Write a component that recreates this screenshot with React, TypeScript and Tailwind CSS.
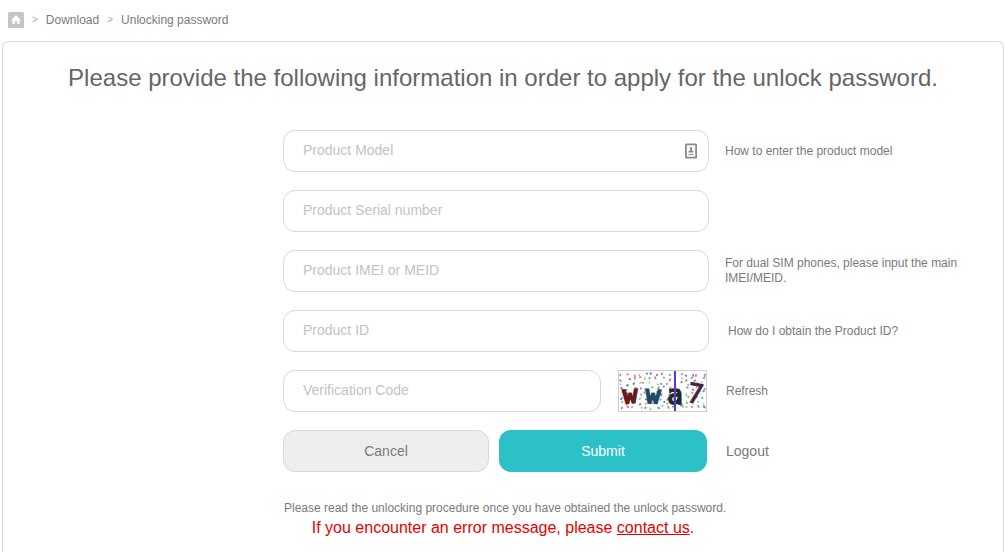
import type { ReactNode } from "react";

function HomeIcon() {
  return (
    <svg viewBox="0 0 16 16" className="block size-4" aria-hidden="true">
      <rect width="16" height="16" rx="1.5" fill="#c4c4c4" />
      <path d="M8 3 13.2 8.200H11.6V12H9.2V9.2H6.8V12H4.4V8.200H2.8Z" fill="#fff" />
    </svg>
  );
}

function CardIcon() {
  return (
    <svg viewBox="0 0 12 16" className="block h-4 w-3" aria-hidden="true">
      <rect x="0.9" y="1.4" width="10.2" height="13.2" rx="0.6" fill="#fff" stroke="#8a8a8a" strokeWidth="1.8" />
      <circle cx="6" cy="5.2" r="1.2" fill="#8a8a8a" />
      <path d="M5.2 6h1.6v1.4l1.7.8v1.3h-5V8.2l1.7-.8z" fill="#8a8a8a" />
      <path d="M3.3 11.5h5.4" stroke="#9a9a9a" strokeWidth="1.2" />
    </svg>
  );
}

const SPECKS = (() => {
  const colours = ["#d23b6f", "#3fae55", "#4a3fd4", "#c13fc5", "#3aa0b8", "#8a8a30", "#5a4a90", "#e0603a", "#6fd48a"];
  let seed = 4711;
  const next = () => {
    seed = (seed * 16807) % 2147483647;
    return seed / 2147483647;
  };
  return Array.from({ length: 120 }, (_, i) => ({
    x: 2 + (i % 15) * 5.8 + next() * 4.5,
    y: 2 + Math.floor(i / 15) * 4.8 + next() * 3.6,
    dx: next() * 2 - 1,
    dy: next() * 1.4,
    colour: colours[Math.floor(next() * colours.length)],
  }));
})();

const GLYPHS = [
  { char: "w", x: 12, y: 33, size: 24, colour: "#6a1a1a", turn: -3, weight: 2 },
  { char: "w", x: 35, y: 33, size: 24, colour: "#1f4a66", turn: 4, weight: 2 },
  { char: "a", x: 57, y: 34, size: 26, colour: "#1d2b2b", turn: 0, weight: 1.6 },
  { char: "7", x: 77, y: 33, size: 27, colour: "#4a2238", turn: 10, weight: 0.8 },
];

function Captcha() {
  return (
    <svg viewBox="0 0 89 42" className="block h-[42px] w-[89px]" role="img" aria-label="Verification code picture">
      <rect x="0.5" y="0.5" width="88" height="41" fill="#fff" stroke="#cfcfcf" />
      {SPECKS.map((s, i) => (
        <path
          key={i}
          d={`M${s.x} ${s.y}l${s.dx} ${s.dy}`}
          stroke={s.colour}
          strokeWidth="1.8"
          strokeLinecap="round"
          opacity="0.75"
        />
      ))}
      {GLYPHS.map((g, i) => (
        <text
          key={i}
          x={g.x}
          y={g.y}
          fontSize={g.size}
          fill={g.colour}
          stroke={g.colour}
          strokeWidth={g.weight}
          textAnchor="middle"
          transform={`rotate(${g.turn} ${g.x} ${g.y - 7})`}
          className="font-['DejaVu_Sans_Mono',monospace]"
        >
          {g.char}
        </text>
      ))}
      <path d="M57 1v40" stroke="#5a3cc0" strokeWidth="2" />
    </svg>
  );
}

function Field({ label, children }: { label: string; children?: ReactNode }) {
  return (
    <label className="flex h-[42px] min-w-0 flex-1 items-center rounded-xl border border-[#d9d9d9] bg-white pr-[11px] pl-[19px]">
      <input
        type="text"
        aria-label={label}
        placeholder={label}
        className="min-w-0 flex-1 bg-transparent pb-0.5 text-sm text-[#666] outline-none placeholder:text-[#c3c3c3]"
      />
      {children}
    </label>
  );
}

function Row({ hint, children }: { hint?: ReactNode; children: ReactNode }) {
  return (
    <div className="grid grid-cols-[20fr_426px_21fr] items-center">
      <div className="col-start-2 flex items-center">{children}</div>
      <div className="pr-8 pl-4 text-xs leading-[15px]">{hint}</div>
    </div>
  );
}

export default function App() {
  return (
    <div className="flex min-h-screen flex-col bg-white font-['Liberation_Sans',Arial,sans-serif] text-[#7a7a7a]">
      <nav aria-label="Breadcrumb" className="flex h-[41px] items-center gap-2 px-2 pb-px text-xs">
        <a href="#home" aria-label="Home">
          <HomeIcon />
        </a>
        <span className="text-[10px] text-[#aaa]">&gt;</span>
        <a href="#download">Download</a>
        <span className="text-[10px] text-[#aaa]">&gt;</span>
        <span>Unlocking password</span>
      </nav>

      <main className="mr-px ml-0.5 flex-1 rounded-t-md border border-b-0 border-[#d9d9d9] pt-5">
        <h1 className="text-center text-2xl leading-8 text-[#666]">
          Please provide the following information in order to apply for the unlock password.
        </h1>

        <form className="mt-9 flex flex-col gap-[18px]" onSubmit={(e) => e.preventDefault()}>
          <Row hint={<a href="#model">How to enter the product model</a>}>
            <Field label="Product Model">
              <CardIcon />
            </Field>
          </Row>
          <Row>
            <Field label="Product Serial number" />
          </Row>
          <Row hint="For dual SIM phones, please input the main IMEI/MEID.">
            <Field label="Product IMEI or MEID" />
          </Row>
          <Row hint={<a href="#product-id" className="pl-[3px]">How do I obtain the Product ID?</a>}>
            <Field label="Product ID" />
          </Row>
          <Row hint={<button type="button" className="pl-px">Refresh</button>}>
            <Field label="Verification Code" />
            <div className="pr-0.5 pl-[17px]">
              <Captcha />
            </div>
          </Row>
          <Row hint={<a href="#logout" className="pl-px text-sm">Logout</a>}>
            <div className="flex flex-1 gap-2.5 pr-0.5 text-sm">
              <button type="button" className="h-[42px] w-[206px] rounded-xl border border-[#d9d9d9] bg-[#eee]">
                Cancel
              </button>
              <button type="submit" className="h-[42px] flex-1 rounded-xl bg-[#2bc1c7] text-white">
                Submit
              </button>
            </div>
          </Row>
        </form>

        <div className="mt-7 grid grid-cols-[20fr_21fr_426px] text-xs leading-4">
          <p className="col-span-2 col-start-2 pl-px">
            Please read the unlocking procedure once you have obtained the unlock password.
          </p>
        </div>
        <p className="mt-0.5 text-center text-base leading-5 text-[#e60000]">
          If you encounter an error message, please{" "}
          <a href="#contact" className="underline">
            contact us
          </a>
          .
        </p>
      </main>
    </div>
  );
}
